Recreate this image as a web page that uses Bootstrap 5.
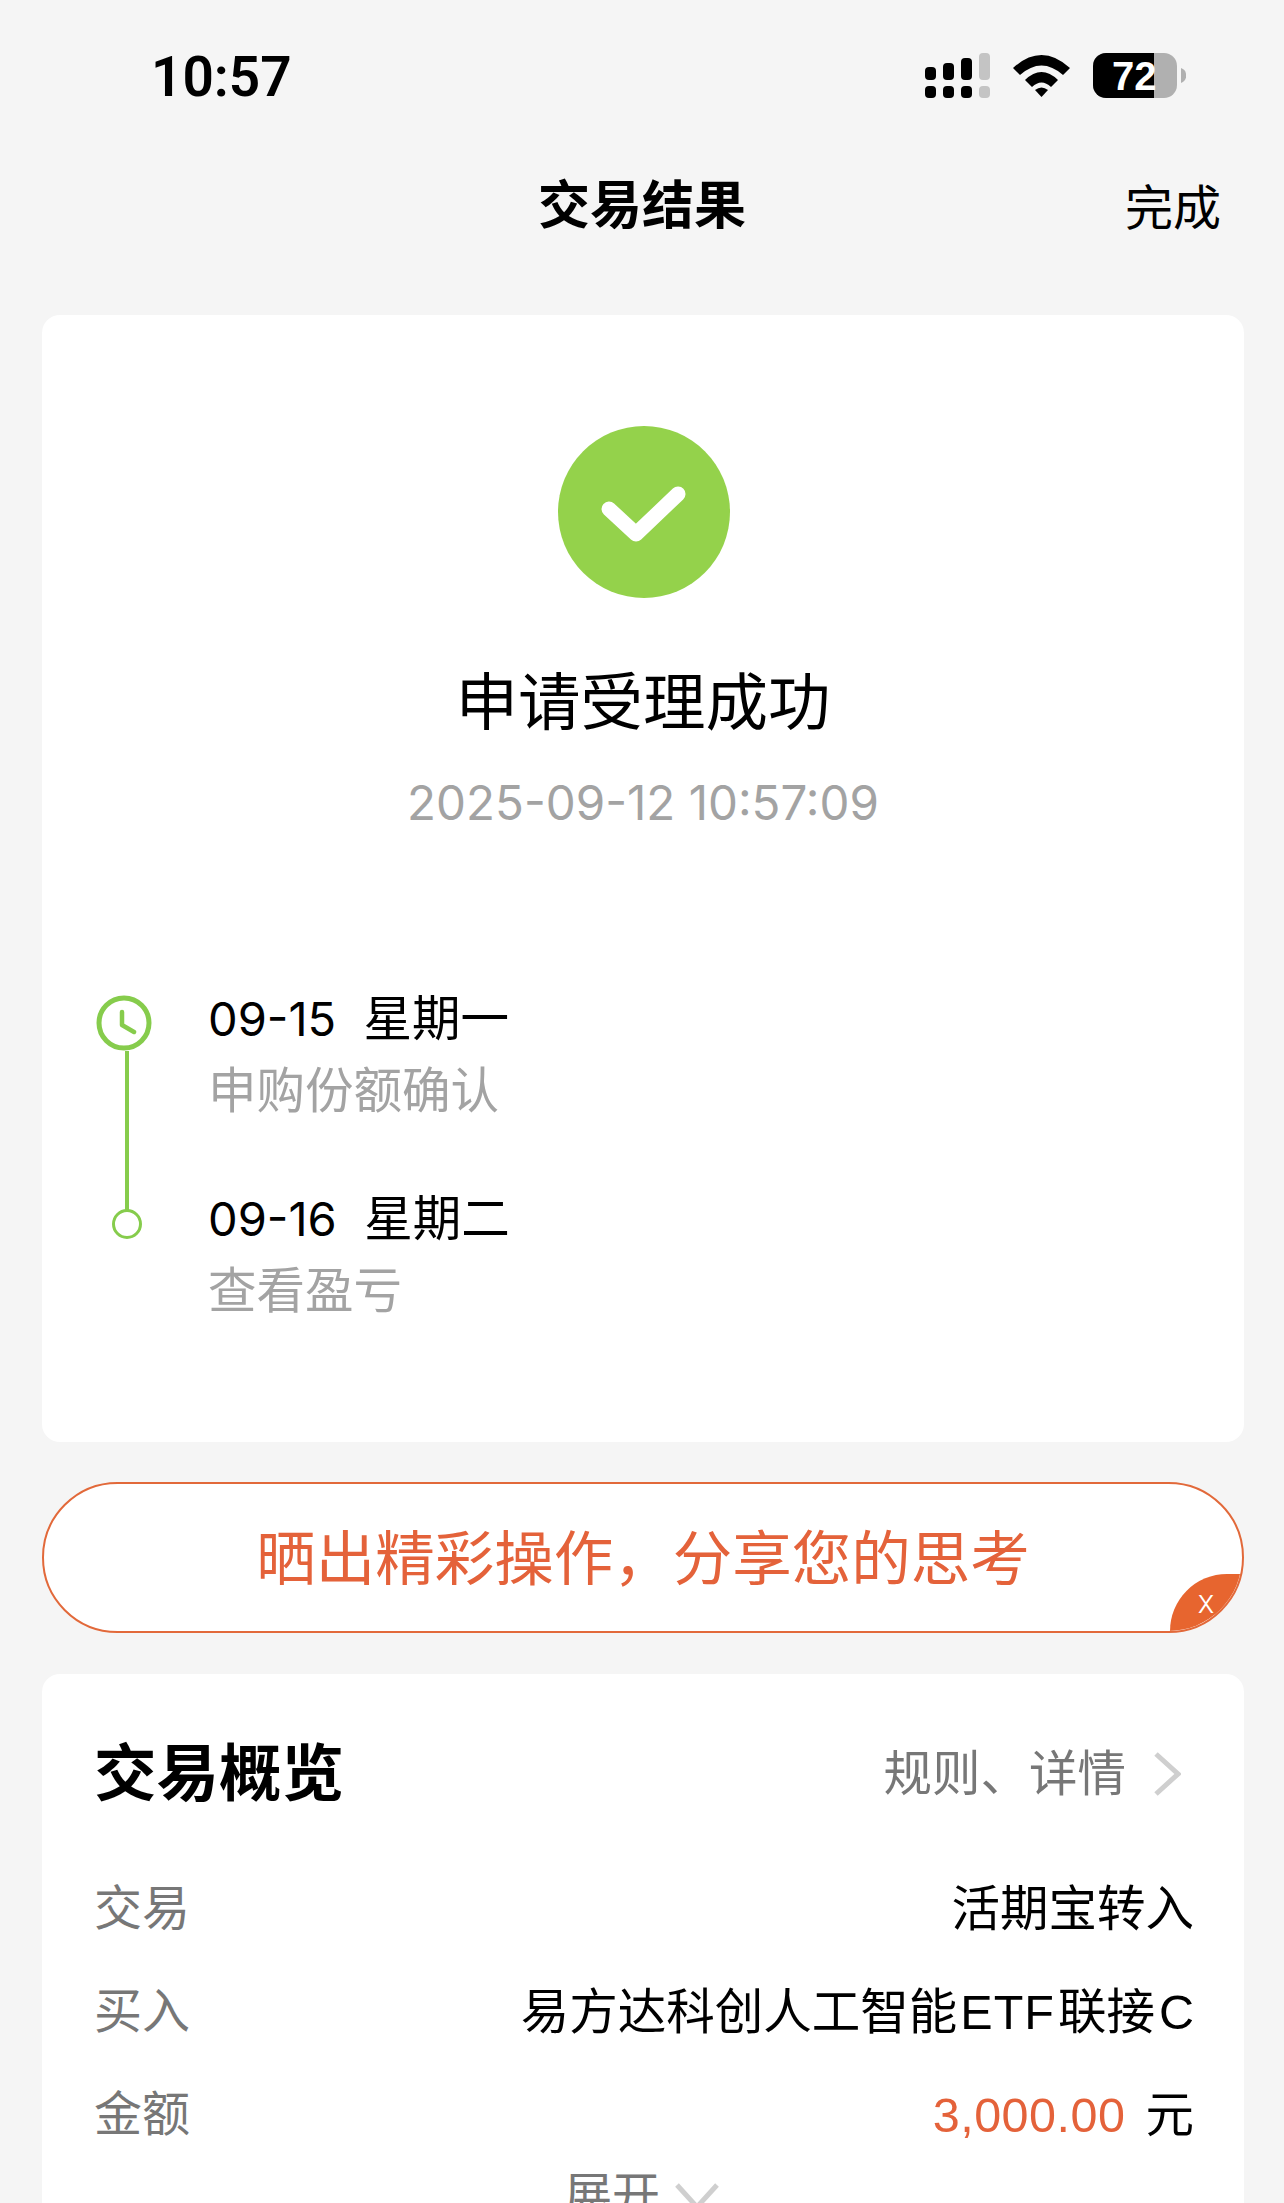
<!DOCTYPE html>
<html lang="zh-CN">
  <head>
    <meta charset="UTF-8" />
    <meta name="viewport" content="width=device-width, initial-scale=1.0" />
    <title>交易结果</title>
    <link href="https://cdn.jsdelivr.net/npm/bootstrap@5.3.0/dist/css/bootstrap.min.css" rel="stylesheet" />
    <style>
      html, body { height: 2203px; overflow: hidden; }
      body {
        background: #f5f5f5;
        color: #000;
        font-family: "Liberation Sans", "Noto Sans CJK SC", sans-serif;
        font-size: 48px;
        line-height: 60px;
      }
      .status-bar { height: 152px; padding: 47px 98px 0 151px; }
      .status-time { font-family: Roboto, sans-serif; font-size: 55px; font-weight: 600; line-height: 60px; }
      .status-icons { gap: 23px; margin-top: 6px; }
      .top-bar { position: relative; height: 107px; line-height: 108px; }
      .top-title { font-size: 52px; font-weight: 700; }
      .top-action { position: absolute; right: 63px; top: 3px; }
      .panel { border: 0; border-radius: 18px; background: #fff; margin: 56px 40px 0 42px; }
      .panel-main { height: 1127px; padding-top: 111px; }
      .ok-icon { width: 172px; height: 172px; margin-left: calc(50% - 85px); }
      .result-title { font-size: 62.5px; line-height: 80px; margin-top: 65px; }
      .result-time { font-family: Inter, "Liberation Sans", sans-serif; font-size: 47.5px; line-height: 60px; margin-top: 30px; color: #a3a3a3; }
      .steps { padding: 157px 0 0 54px; gap: 50px; }
      .rail { width: 62px; height: 244px; margin-top: 5px; }
      .rail-clock { width: 56px; height: 56px; margin-left: -6px; flex: none; }
      .rail-line { width: 4px; flex: 1; background: #86cc4c; }
      .rail-dot { width: 30px; height: 30px; flex: none; border: 3px solid #86cc4c; border-radius: 50%; margin-top: -1px; }
      .step-date { font-size: 48.5px; line-height: 58px; word-spacing: 14px; }
      .step-day { font-family: Inter, "Liberation Sans", sans-serif; font-size: 47px; }
      .step-note { color: #a3a3a3; font-size: 48.5px; line-height: 58px; margin-top: 14px; }
      .step-gap { margin-top: 70px; }
      .share-banner {
        position: relative;
        overflow: hidden;
        height: 151px;
        margin: 40px 40px 0 42px;
        background: #fff;
        border: 2px solid #e2693a;
        border-radius: 76px;
        color: #e4623a;
        font-size: 59.5px;
      }
      .banner-text { position: relative; top: 2px; }
      .banner-close {
        position: absolute;
        right: 0;
        bottom: 0;
        width: 72px;
        height: 57px;
        background: #e7652f;
        border-top-left-radius: 57px 57px;
        color: #fff;
        font-family: Roboto, sans-serif;
        font-weight: 300;
        font-size: 34px;
        line-height: 34px;
        text-align: center;
        padding: 10px 0 0 0;
      }
      .panel-info { margin-top: 41px; padding: 60px 50px 0 52px; height: 800px; }
      .info-head { line-height: 80px; margin-bottom: 65px; }
      .info-title { font-size: 62.5px; font-weight: 700; }
      .info-link { color: #777; font-size: 48.5px; gap: 27px; margin-right: 13px; }
      .info-row { height: 60px; margin-bottom: 43px; }
      .info-label { color: #777; }
      .info-value { font-size: 48.5px; }
      .info-amount { color: #e4623a; font-size: 48.5px; letter-spacing: 0.5px; margin-right: 20px; }
      .info-latin { letter-spacing: 1px; margin: 0 3px; }
      .info-last { margin-left: 4px; }
      .info-more { color: #777; margin-top: -22px; gap: 14px; padding-right: 4px; }
    </style>
  </head>
  <body>
    <div class="status-bar d-flex justify-content-between align-items-start">
      <div class="status-time">10:57</div>
      <div class="status-icons d-flex align-items-center">
        <svg width="65" height="45" viewBox="0 0 65 45">
          <rect x="0" y="14" width="11" height="13" rx="4" />
          <rect x="18" y="10" width="11" height="17" rx="4" />
          <rect x="36" y="5" width="11" height="22" rx="4" />
          <rect x="54" y="0" width="11" height="27" rx="4" fill="#c4c4c4" />
          <rect x="0" y="33" width="11" height="12" rx="4" />
          <rect x="18" y="33" width="11" height="12" rx="4" />
          <rect x="36" y="33" width="11" height="12" rx="4" />
          <rect x="54" y="33" width="11" height="12" rx="4" fill="#c4c4c4" />
        </svg>
        <svg width="57" height="42" viewBox="0 0 57 42">
          <path d="M0 13Q28.5-13 57 13L50 20Q28.5 1 7 20Z" />
          <path d="M12 25Q28.5 9 45 25L38 32Q28.5 23 19 32Z" />
          <path d="M22 35Q28.5 30 35 35L28.5 42Z" />
        </svg>
        <svg class="ms-n1" width="93" height="45" viewBox="0 0 93 45">
          <rect x="0" y="0" width="84" height="45" rx="13" fill="#b0b0b0" />
          <path d="M13 0H61V45H13A13 13 0 0 1 0 32V13A13 13 0 0 1 13 0Z" />
          <path d="M88 15a8 8 0 0 1 0 15Z" fill="#b0b0b0" />
          <text x="19" y="37" fill="#fff" font-family="Liberation Sans" font-weight="700" font-size="40">72</text>
        </svg>
      </div>
    </div>

    <div class="top-bar text-center">
      <span class="top-title">交易结果</span>
      <span class="top-action">完成</span>
    </div>

    <div class="card panel panel-main">
      <div class="text-center">
        <svg class="ok-icon d-block" viewBox="0 0 172 172">
          <circle cx="86" cy="86" r="86" fill="#94d24b" />
          <path d="M51 83L78 108L120 68" fill="none" stroke="#fff" stroke-width="15" stroke-linecap="round" stroke-linejoin="round" />
        </svg>
        <div class="result-title">申请受理成功</div>
        <div class="result-time">2025-09-12 10:57:09</div>
      </div>

      <div class="steps d-flex align-items-start">
        <div class="rail d-flex flex-column align-items-center">
          <svg class="rail-clock" viewBox="0 0 56 56">
            <circle cx="28" cy="28" r="25" fill="#fff" stroke="#86cc4c" stroke-width="5" />
            <path d="M26 17V30L38 37" fill="none" stroke="#86cc4c" stroke-width="4.5" stroke-linecap="round" stroke-linejoin="round" />
          </svg>
          <div class="rail-line"></div>
          <div class="rail-dot"></div>
        </div>
        <div>
          <div class="step-date"><span class="step-day">09-15</span> 星期一</div>
          <div class="step-note">申购份额确认</div>
          <div class="step-date step-gap"><span class="step-day">09-16</span> 星期二</div>
          <div class="step-note">查看盈亏</div>
        </div>
      </div>
    </div>

    <div class="share-banner d-flex align-items-center justify-content-center">
      <span class="banner-text">晒出精彩操作，分享您的思考</span>
      <div class="banner-close">x</div>
    </div>

    <div class="card panel panel-info">
      <div class="info-head d-flex justify-content-between align-items-center">
        <span class="info-title">交易概览</span>
        <span class="info-link d-flex align-items-center">
          规则、详情
          <svg width="28" height="46" viewBox="0 0 28 46">
            <path d="M3 3L25 23L3 43" fill="none" stroke="#cfcfcf" stroke-width="5" />
          </svg>
        </span>
      </div>
      <div class="info-row d-flex justify-content-between">
        <span class="info-label">交易</span>
        <span class="info-value">活期宝转入</span>
      </div>
      <div class="info-row d-flex justify-content-between">
        <span class="info-label">买入</span>
        <span class="info-value">易方达科创人工智能<span class="info-latin">ETF</span>联接<span class="info-last">C</span></span>
      </div>
      <div class="info-row d-flex justify-content-between">
        <span class="info-label">金额</span>
        <span class="info-value"><span class="info-amount">3,000.00</span>元</span>
      </div>
      <div class="info-more d-flex justify-content-center align-items-center">
        展开
        <svg width="46" height="28" viewBox="0 0 46 28">
          <path d="M3 3L23 25L43 3" fill="none" stroke="#cfcfcf" stroke-width="5" />
        </svg>
      </div>
    </div>

    <script src="https://cdn.jsdelivr.net/npm/bootstrap@5.3.0/dist/js/bootstrap.bundle.min.js"></script>
  </body>
</html>
